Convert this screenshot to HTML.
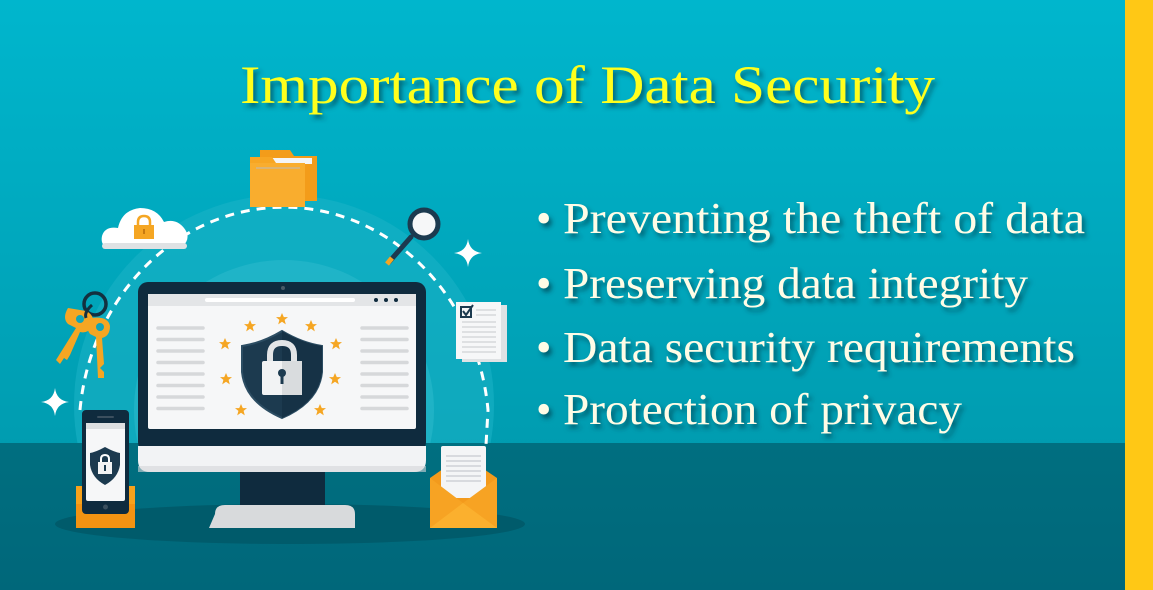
<!DOCTYPE html>
<html><head><meta charset="utf-8"><style>
html,body{margin:0;padding:0;}
body{width:1153px;height:590px;overflow:hidden;}
svg{display:block}
</style></head><body>
<svg width="1153" height="590" viewBox="0 0 1153 590" xmlns="http://www.w3.org/2000/svg">
<defs>
<linearGradient id="bg" x1="0" y1="0" x2="0" y2="1">
<stop offset="0" stop-color="#00b6cd"/><stop offset="1" stop-color="#0094a7"/></linearGradient>
<linearGradient id="fl" x1="0" y1="0" x2="0" y2="1">
<stop offset="0" stop-color="#006f80"/><stop offset="1" stop-color="#00677a"/></linearGradient>
<filter id="sh" x="-5%" y="-20%" width="110%" height="150%"><feDropShadow dx="3" dy="4" stdDeviation="2.5" flood-color="#003040" flood-opacity="0.6"/></filter>
<g id="star"><path d="M0,-6 L1.8,-1.9 6,-1.9 2.6,0.9 3.8,5.4 0,2.8 -3.8,5.4 -2.6,0.9 -6,-1.9 -1.8,-1.9Z" fill="#f5a623"/></g>
<g id="spark"><path d="M0,-14 Q1.5,-1.5 14,0 Q1.5,1.5 0,14 Q-1.5,1.5 -14,0 Q-1.5,-1.5 0,-14Z" fill="#fff"/></g>
</defs>
<rect width="1153" height="590" fill="url(#bg)"/>
<rect x="0" y="443" width="1153" height="147" fill="url(#fl)"/>
<rect x="1125" y="0" width="28" height="590" fill="#ffc815"/>

<clipPath id="top"><rect x="0" y="0" width="1125" height="443"/></clipPath>
<g clip-path="url(#top)">
<circle cx="284" cy="405" r="210" fill="#1bb3c6" opacity="0.55"/>
<circle cx="284" cy="410" r="150" fill="#2fbccd" opacity="0.5"/>
</g>
<path d="M80,410 A205,225 0 0 1 488,410 L486,445" fill="none" stroke="#fff" stroke-width="3" stroke-dasharray="9,7"/>

<ellipse cx="290" cy="524" rx="235" ry="20" fill="#005b6b"/>

<rect x="138" y="282" width="288" height="170" rx="10" fill="#0f2b3e"/>
<path d="M138,446 H426 V460 Q426,472 414,472 H150 Q138,472 138,460Z" fill="#f2f3f5"/>
<rect x="138" y="466" width="288" height="6" fill="#d3d6d9" opacity="0.6"/>
<rect x="240" y="472" width="85" height="42" fill="#0f2b3e"/>
<path d="M215,514 Q215,505 225,505 H345 Q355,505 355,514 V528 H209Z" fill="#d8dadc"/>
<rect x="148" y="294" width="268" height="135" rx="2" fill="#f6f7f8"/>
<rect x="148" y="294" width="268" height="12" fill="#e3e5e7"/>
<rect x="205" y="298" width="150" height="4" rx="2" fill="#fff"/>
<circle cx="376" cy="300" r="2" fill="#0f2b3e"/><circle cx="386" cy="300" r="2" fill="#0f2b3e"/><circle cx="396" cy="300" r="2" fill="#0f2b3e"/>
<circle cx="283" cy="288" r="2" fill="#4a5a66"/>
<g stroke="#d6d8da" stroke-width="3.5" stroke-linecap="round">
<path d="M158,328H203M158,339.5H203M158,351H203M158,362.5H203M158,374H203M158,385.5H203M158,397H203M158,408.5H203"/>
<path d="M362,328H407M362,339.5H407M362,351H407M362,362.5H407M362,374H407M362,385.5H407M362,397H407M362,408.5H407"/>
</g>
<use href="#star" x="282" y="319"/><use href="#star" x="250" y="326"/><use href="#star" x="311" y="326"/>
<use href="#star" x="225" y="344"/><use href="#star" x="336" y="344"/>
<use href="#star" x="226" y="379"/><use href="#star" x="335" y="379"/>
<use href="#star" x="241" y="410"/><use href="#star" x="320" y="410"/>
<path d="M282,331 Q262,343 242,346 L242,372 Q245,402 282,418 Q319,402 322,372 L322,346 Q302,343 282,331Z" fill="#1c3a4f" stroke="#2c4d63" stroke-width="2"/>
<path d="M282,331 L282,418 Q319,402 322,372 L322,346 Q302,343 282,331Z" fill="#163246"/>
<path d="M270,363 V355 Q270,343 282,343 Q294,343 294,355 V363" fill="none" stroke="#e3e5e7" stroke-width="6"/>
<rect x="262" y="361" width="40" height="34" rx="2" fill="#f2f3f4"/>
<rect x="282" y="361" width="20" height="34" fill="#d9dcde"/>
<circle cx="282" cy="373" r="4" fill="#1c3a4f"/><rect x="280.5" y="375" width="3" height="9" fill="#1c3a4f"/>

<rect x="76" y="486" width="59" height="42" fill="#f7a21b"/>
<rect x="76" y="504" width="59" height="24" fill="#f39312"/>
<rect x="82" y="410" width="47" height="104" rx="4" fill="#0f2b3e"/>
<rect x="86" y="423" width="39" height="78" rx="2" fill="#f6f7f8"/>
<rect x="86" y="423" width="39" height="6" fill="#dcdfe1"/>
<rect x="97" y="416" width="17" height="2" rx="1" fill="#3b4f5e"/>
<circle cx="105.5" cy="507" r="2.5" fill="#3b4f5e"/>
<path d="M105,447 Q96,452 90,453 V465 Q92,478 105,485 Q118,478 120,465 V453 Q114,452 105,447Z" fill="#1c3a4f"/>
<path d="M101,463 V459 Q101,455 105,455 Q109,455 109,459 V463" fill="none" stroke="#fff" stroke-width="2"/>
<rect x="98" y="462" width="14" height="12" fill="#f2f3f4"/>
<rect x="104" y="465" width="2" height="6" fill="#1c3a4f"/>

<path d="M430,478 L463,455 L497,478 V528 H430Z" fill="#f39a1c"/>
<rect x="441" y="446" width="45" height="52" rx="2" fill="#f4f5f6"/>
<g stroke="#cfd2d5" stroke-width="1.5"><path d="M446,456H481M446,461H481M446,466H481M446,471H481M446,476H481M446,481H481"/></g>
<path d="M430,478 L463,503 L497,478 V528 H430Z" fill="#f7a323"/>
<path d="M430,528 L463,503 L497,528Z" fill="#fbb02e"/>

<rect x="462" y="305" width="45" height="57" fill="#dfe2e4"/>
<rect x="456" y="302" width="45" height="57" fill="#f6f7f8"/>
<rect x="461" y="307" width="10" height="10" fill="none" stroke="#1c3a4f" stroke-width="2"/>
<path d="M463,311 L466,315 L473,305" fill="none" stroke="#1c3a4f" stroke-width="2"/>
<g stroke="#cfd2d5" stroke-width="1.3"><path d="M462,322H496M462,327H496M462,332H496M462,337H496M462,342H496M462,347H496M462,352H496M476,310H496M476,315H496"/></g>

<path d="M411,237 L389,262" stroke="#1c3a4f" stroke-width="5" stroke-linecap="round"/>
<path d="M392,258 L387,264" stroke="#f5a623" stroke-width="5"/>
<circle cx="424" cy="224" r="14" fill="#f6f7f8" stroke="#1c3a4f" stroke-width="5"/>

<path d="M110,247 Q100,247 102,236 Q105,226 118,228 Q122,210 140,208 Q157,208 164,222 Q176,218 184,228 Q192,238 182,247Z" fill="#fff"/>
<rect x="102" y="243" width="85" height="6" rx="3" fill="#dfe2e4"/>
<path d="M138,227 V222 Q138,216 144,216 Q150,216 150,222 V227" fill="none" stroke="#f5a623" stroke-width="2.5"/>
<rect x="134" y="225" width="20" height="14" fill="#f5a623"/>
<rect x="143" y="229" width="2" height="5" fill="#c77a10"/>

<path d="M260,150 H290 L294,156 H317 V201 H260Z" fill="#f39c1a"/>
<rect x="254" y="158" width="58" height="6" fill="#f4f5f6"/>
<path d="M250,157 H272 L276,163 H305 V207 H250Z" fill="#f7a623"/>
<rect x="250" y="163" width="55" height="44" fill="#f9ad2e"/>
<g stroke="#bcbcbc" stroke-width="1"><path d="M256,168H300"/></g>

<circle cx="95" cy="304" r="11" fill="none" stroke="#13303f" stroke-width="3.5"/>
<path d="M68,308 Q62,318 68,324 L76,328 L56,360 L60,364 L64,358 L67,360 L70,355 L80,332 Q88,334 92,326 Q96,316 86,311Z" fill="#f5a623"/>
<circle cx="80" cy="319" r="4" fill="#0fa5b8"/>
<path d="M92,318 Q84,326 90,334 L96,337 L98,378 L104,378 L104,372 L100,368 L104,364 L102,338 Q110,336 110,326 Q108,316 92,318Z" fill="#f5a623"/>
<circle cx="100" cy="327" r="4" fill="#0fa5b8"/>
<path d="M92,305 Q84,312 86,318" fill="none" stroke="#13303f" stroke-width="3"/>

<use href="#spark" x="468" y="253"/>
<use href="#spark" x="55" y="402"/>

<text x="240" y="103" textLength="695" lengthAdjust="spacingAndGlyphs" font-family="'Liberation Serif',serif" font-size="54" fill="#ffff1a" filter="url(#sh)">Importance of Data Security</text>
<g font-family="'Liberation Serif',serif" font-size="44" fill="#fffce6" filter="url(#sh)">
<text x="536" y="233">•</text><text x="563" y="233" textLength="522" lengthAdjust="spacingAndGlyphs">Preventing the theft of data</text>
<text x="536" y="298">•</text><text x="563" y="298" textLength="465" lengthAdjust="spacingAndGlyphs">Preserving data integrity</text>
<text x="536" y="362">•</text><text x="563" y="362" textLength="512" lengthAdjust="spacingAndGlyphs">Data security requirements</text>
<text x="536" y="424">•</text><text x="563" y="424" textLength="399" lengthAdjust="spacingAndGlyphs">Protection of privacy</text>
</g>
</svg>
</body></html>
